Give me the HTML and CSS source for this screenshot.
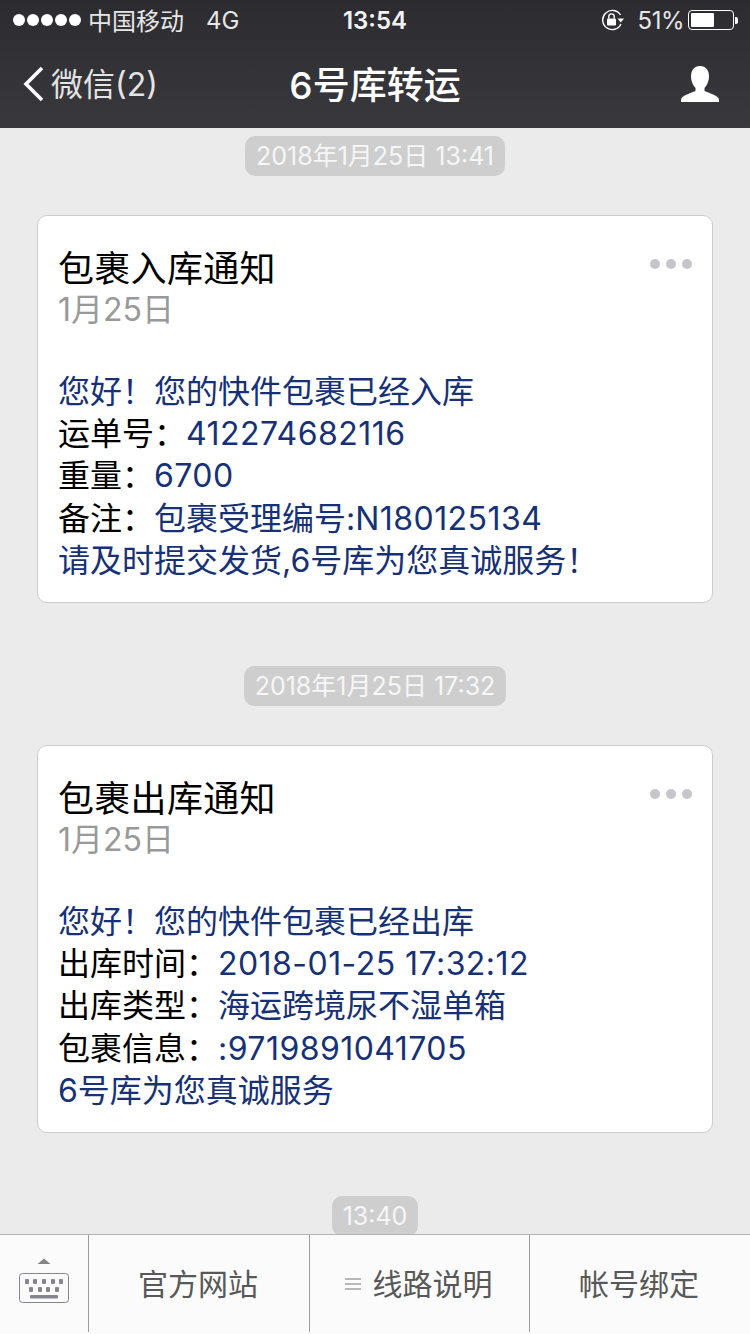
FILE: index.html
```html
<!DOCTYPE html>
<html lang="zh-CN">
<head>
    <meta charset="UTF-8">
    <meta name="viewport" content="width=device-width, initial-scale=1.0">
    <title>6号库转运</title>
    <link rel="stylesheet" href="styles.css">
</head>
<body>
<div class="phone">
    <header class="top">
        <div class="status">
            <div class="status-left">
                <span class="signal"><i></i><i></i><i></i><i></i><i></i></span>
                <span class="carrier">中国移动</span>
                <span class="network">4G</span>
            </div>
            <div class="clock">13:54</div>
            <div class="status-right">
                <svg class="lock" width="24" height="22" viewBox="0 0 24 22">
                    <path d="M19.5 6A9.6 9.6 0 1 0 20 15" fill="none" stroke="#fff" stroke-width="1.4"/>
                    <path d="M16.5 9.5h6.5l-3.2 4z" fill="#fff"/>
                    <rect x="6" y="9.5" width="9" height="7" rx="1" fill="#fff"/>
                    <path d="M7.800 9.500V7.600a2.700 2.700 0 0 1 5.400 0v1.900" fill="none" stroke="#fff" stroke-width="1.4"/>
                </svg>
                <span class="percent">51%</span>
                <span class="battery"><span class="battery-fill"></span></span>
                <span class="battery-nub"></span>
            </div>
        </div>
        <nav class="nav">
            <div class="back">
                <svg width="24" height="36" viewBox="0 0 24 36">
                    <path d="M20 2L4 18l16 16" fill="none" stroke="#fff" stroke-width="3.6"/>
                </svg>
                <span class="back-label">微信(2)</span>
            </div>
            <div class="nav-title">6号库转运</div>
            <svg class="user" width="38" height="36" viewBox="0 0 38 36">
                <path d="M19 0c6 0 9 4.500 9 10.500 0 4.500-2 9-4.500 11.500v3c4 2 14 4.500 14.500 8.500V36H0v-2.500C.5 29.500 10.500 27 14.500 25v-3C12 19.500 10 15 10 10.500 10 4.500 13 0 19 0z" fill="#fff"/>
            </svg>
        </nav>
    </header>

    <main class="chat">
        <div class="chip-row"><span class="chip">2018年1月25日 13:41</span></div>
        <section class="card">
            <div class="dots"><i></i><i></i><i></i></div>
            <h2 class="card-title">包裹入库通知</h2>
            <p class="card-date">1月25日</p>
            <p class="line blue">您好！您的快件包裹已经入库</p>
            <p class="line">运单号：<span class="blue num">412274682116</span></p>
            <p class="line">重量：<span class="blue num">6700</span></p>
            <p class="line">备注：<span class="blue">包裹受理编号:<span class="num">N180125134</span></span></p>
            <p class="line blue">请及时提交发货,6号库为您真诚服务！</p>
        </section>

        <div class="chip-row"><span class="chip">2018年1月25日 17:32</span></div>
        <section class="card">
            <div class="dots"><i></i><i></i><i></i></div>
            <h2 class="card-title">包裹出库通知</h2>
            <p class="card-date">1月25日</p>
            <p class="line blue">您好！您的快件包裹已经出库</p>
            <p class="line">出库时间：<span class="blue num">2018-01-25 17:32:12</span></p>
            <p class="line">出库类型：<span class="blue">海运跨境尿不湿单箱</span></p>
            <p class="line">包裹信息：<span class="blue num">:9719891041705</span></p>
            <p class="line blue">6号库为您真诚服务</p>
        </section>

        <div class="chip-row"><span class="chip">13:40</span></div>
    </main>

    <footer class="tabs">
        <div class="tab-keyboard">
            <svg width="52" height="48" viewBox="0 0 52 48">
                <path d="M19.500 8l6.500-5.500 6.500 5.500z" fill="#85858d"/>
                <rect x="1.500" y="17.500" width="49" height="29" rx="3" fill="none" stroke="#85858d" stroke-width="1"/>
                <g fill="#85858d">
                    <rect x="7" y="23" width="4" height="5" rx="1"/><rect x="15" y="23" width="4" height="5" rx="1"/><rect x="24" y="23" width="4" height="5" rx="1"/><rect x="33" y="23" width="4" height="5" rx="1"/><rect x="41" y="23" width="4" height="5" rx="1"/>
                    <rect x="11" y="31" width="4" height="5" rx="1"/><rect x="20" y="31" width="4" height="5" rx="1"/><rect x="28" y="31" width="4" height="5" rx="1"/><rect x="37" y="31" width="4" height="5" rx="1"/>
                    <rect x="12" y="39" width="28" height="3.500" rx="1"/>
                </g>
            </svg>
        </div>
        <div class="tab">官方网站</div>
        <div class="tab"><span class="burger"><i></i><i></i><i></i></span>线路说明</div>
        <div class="tab">帐号绑定</div>
    </footer>
</div>
</body>
</html>
```

FILE: styles.css
```css
* { box-sizing: border-box; }
html, body { margin: 0; padding: 0; }
body { font-family: Inter, "Noto Sans CJK SC", sans-serif; background: #ebebeb; }
i { display: block; }

.phone { width: 750px; height: 1334px; display: flex; flex-direction: column; overflow: hidden; }

/* top bars */
.top { height: 128px; flex: none; color: #fff; background: linear-gradient(#2c2c30, #39393d); }
.status { height: 40px; display: flex; align-items: center; justify-content: space-between; position: relative; padding: 0 12px 0 13px; font-size: 24px; }
.status-left, .status-right { display: flex; align-items: center; }
.signal { display: flex; gap: 2px; margin-right: 7px; }
.signal i { width: 12px; height: 12px; border-radius: 50%; background: #fff; }
.carrier { color: #e6e6e6; margin-top: -2px; }
.network { margin-left: 22px; color: #e6e6e6; }
.clock { position: absolute; left: 0; right: 0; text-align: center; font-weight: 600; font-size: 24px; color: #f2f2f2; }
.lock { margin-right: 13px; }
.percent { margin-right: 4px; letter-spacing: -.5px; color: #e6e6e6; }
.battery { width: 46px; height: 20px; border: 1px solid #fff; border-radius: 4px; padding: 2px; display: block; }
.battery-fill { display: block; width: 23px; height: 14px; background: #fff; border-radius: 1px; }
.battery-nub { width: 3px; height: 7px; margin: 0 0 0 1px; background: #fff; border-radius: 0 2px 2px 0; }

.nav { height: 88px; display: flex; align-items: center; justify-content: space-between; position: relative; padding: 0 31px 0 22px; }
.back { display: flex; align-items: center; gap: 5px; font-size: 32px; color: #e4e4e4; }
.back-label { margin-top: -4px; }
.nav-title { position: absolute; left: 0; right: 0; top: 16px; text-align: center; font-size: 37px; font-weight: 500; }

/* messages */
.chat { flex: 1; min-height: 0; padding: 0 37px; }
.chip-row { display: flex; justify-content: center; margin-top: 8px; }
.card + .chip-row { margin-top: 63px; }
.chip { height: 40px; line-height: 41px; padding: 0 11px; border-radius: 10px; background: #cecece; color: #f6f6f6; font-size: 25px; white-space: nowrap; }

.card { position: relative; height: 388px; margin-top: 39px; padding: 32px 20px 0; background: #fff; border: 1px solid #cdcdcd; border-radius: 10px; }
.card-title { margin: 0; font-size: 36px; letter-spacing: .3px; line-height: 42px; font-weight: normal; color: #000; }
.card-date { margin: -1px 0 40px; font-size: 32px; line-height: 42px; color: #999; }
.line { margin: 0; font-size: 32px; line-height: 42.2px; color: #000; white-space: nowrap; }
.blue { color: #173177; }
.num { letter-spacing: .45px; }
.dots { position: absolute; top: 43px; right: 20px; display: flex; gap: 6px; }
.dots i { width: 10px; height: 10px; border-radius: 50%; background: #c5c5cb; }

/* bottom menu */
.tabs { height: 100px; flex: none; display: grid; grid-template-columns: 88px 221px 220px 221px; align-items: stretch; padding-bottom: 2px; background: #fbfbfb; border-top: 1px solid #b4b4b4; position: relative; }
.tab-keyboard { display: flex; align-items: flex-start; justify-content: center; padding-top: 21px; }
.tab { display: flex; align-items: center; justify-content: center; padding: 0 2px 4px 0; border-left: 1px solid #9c9c9c; font-size: 30px; color: #585858; }
.burger { display: flex; flex-direction: column; gap: 3px; margin-right: 12px; margin-top: 4px; }
.burger i { width: 16px; height: 2px; background: #b8b8b8; }
```
